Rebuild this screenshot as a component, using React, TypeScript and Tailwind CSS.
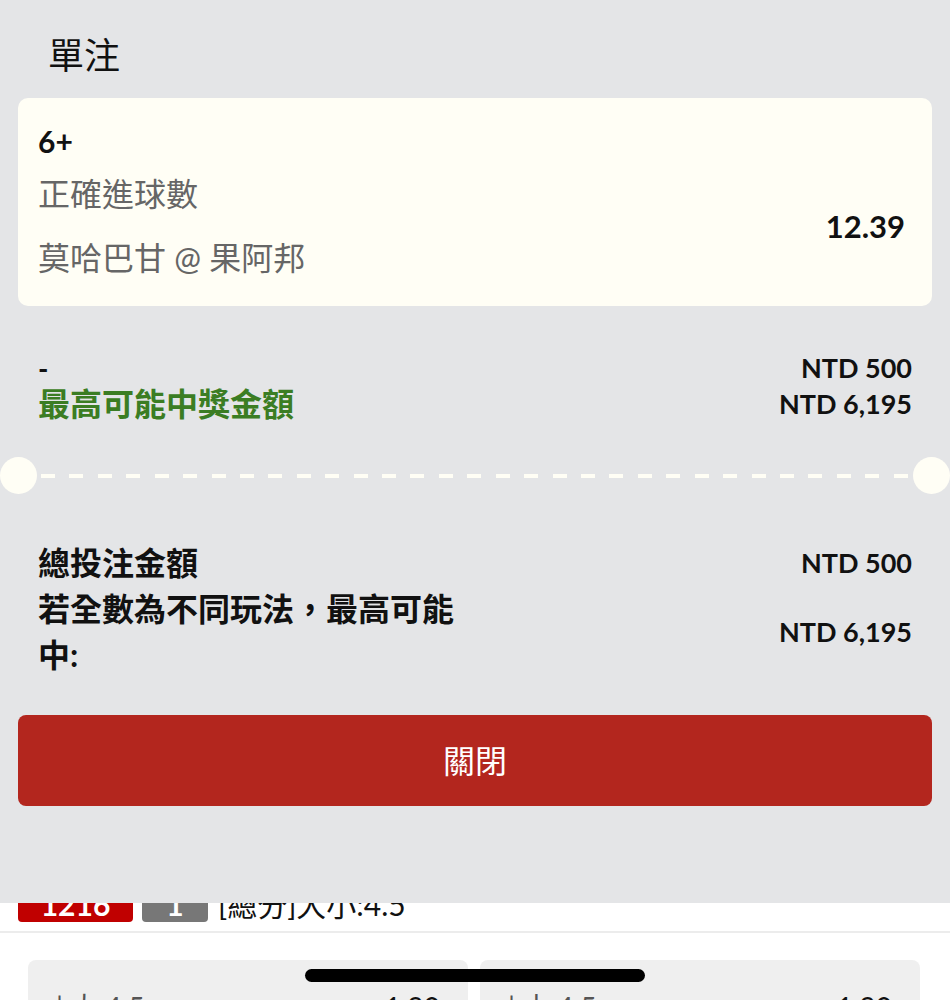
import React from "react";

const font = "font-['Lato','Noto_Sans_CJK_TC',sans-serif]";

function Dashes() {
  const items = Array.from({ length: 31 });
  return (
    <div className="flex-1 flex justify-between items-center pl-[4px] pr-[5px]">
      {items.map((_, i) => (
        <div key={i} className="w-[14px] h-[4px] bg-[#fffef5]" />
      ))}
    </div>
  );
}

export default function App() {
  return (
    <div className={`relative w-[950px] h-[1000px] overflow-hidden bg-white text-[#111] ${font}`}>
      {/* underlying page */}
      <div className="pt-[886px]">
        <div className="flex items-center gap-[9px] px-[18px] h-[36px]">
          <div className="w-[115px] h-[36px] rounded-[4px] bg-[#c00000] text-white text-[30px] font-bold flex items-center justify-center">
            1216
          </div>
          <div className="w-[66px] h-[36px] rounded-[4px] bg-[#777] text-white text-[30px] font-bold flex items-center justify-center">
            1
          </div>
          <div className="text-[30px] ml-[1px]">[總分]大小:4.5</div>
        </div>
        <div className="mt-[9px] h-[2px] bg-[#ececec]" />
        <div className="mt-[27px] flex gap-[12px] pl-[28px] pr-[30px]">
          <div className="flex-1 h-[80px] rounded-[8px] bg-[#efefef] px-[28px] pt-[30px] flex justify-between text-[28px] leading-[34px]">
            <span className="text-[#555]">| 大 4.5</span>
            <span>1.90</span>
          </div>
          <div className="flex-1 h-[80px] rounded-[8px] bg-[#efefef] px-[28px] pt-[30px] flex justify-between text-[28px] leading-[34px]">
            <span className="text-[#555]">| 小 4.5</span>
            <span>1.90</span>
          </div>
        </div>
      </div>

      {/* bottom sheet overlay */}
      <div className="absolute left-0 top-0 w-[950px] h-[903px] bg-[#e4e5e7] flex flex-col">
        <div className="pt-[33px] pl-[48px] text-[36px] leading-[44px]">單注</div>

        <div className="mt-[21px] mx-[18px] rounded-[10px] bg-[#fffef5] pt-[26px] pb-[26px] pl-[20px] pr-[27px]">
          <div className="text-[30px] font-bold leading-[34px]">6+</div>
          <div className="mt-[14px] flex items-center justify-between">
            <div className="flex flex-col text-[#666] text-[32px]">
              <div className="leading-[44px]">正確進球數</div>
              <div className="mt-[20px] leading-[44px]">莫哈巴甘 @ 果阿邦</div>
            </div>
            <div className="text-[31px] font-bold">12.39</div>
          </div>
        </div>

        <div className="mt-[44px] flex justify-between pl-[38px] pr-[38px]">
          <div className="flex flex-col">
            <div className="text-[28px] font-bold leading-[36px]">-</div>
            <div className="text-[32px] font-bold leading-[36px] text-[#3b7d23]">最高可能中獎金額</div>
          </div>
          <div className="flex flex-col items-end text-[27px] font-bold leading-[36px]">
            <div>NTD 500</div>
            <div>NTD 6,195</div>
          </div>
        </div>

        <div className="mt-[35px] flex items-center">
          <div className="w-[37px] h-[37px] rounded-full bg-[#fffef5]" />
          <Dashes />
          <div className="w-[37px] h-[37px] rounded-full bg-[#fffef5]" />
        </div>

        <div className="mt-[46px] flex flex-col pl-[38px] pr-[38px]">
          <div className="flex items-center justify-between">
            <div className="text-[32px] font-bold leading-[46px]">總投注金額</div>
            <div className="text-[27px] font-bold">NTD 500</div>
          </div>
          <div className="flex items-center justify-between">
            <div className="w-[440px] text-[32px] font-bold leading-[46px]">若全數為不同玩法，最高可能中:</div>
            <div className="text-[27px] font-bold">NTD 6,195</div>
          </div>
        </div>

        <div className="mt-[37px] mx-[18px] h-[91px] rounded-[8px] bg-[#b3261e] flex items-center justify-center text-white text-[32px]">
          關閉
        </div>
      </div>

      {/* home indicator */}
      <div className="absolute left-[305px] top-[969px] w-[340px] h-[13px] rounded-full bg-black" />
    </div>
  );
}
